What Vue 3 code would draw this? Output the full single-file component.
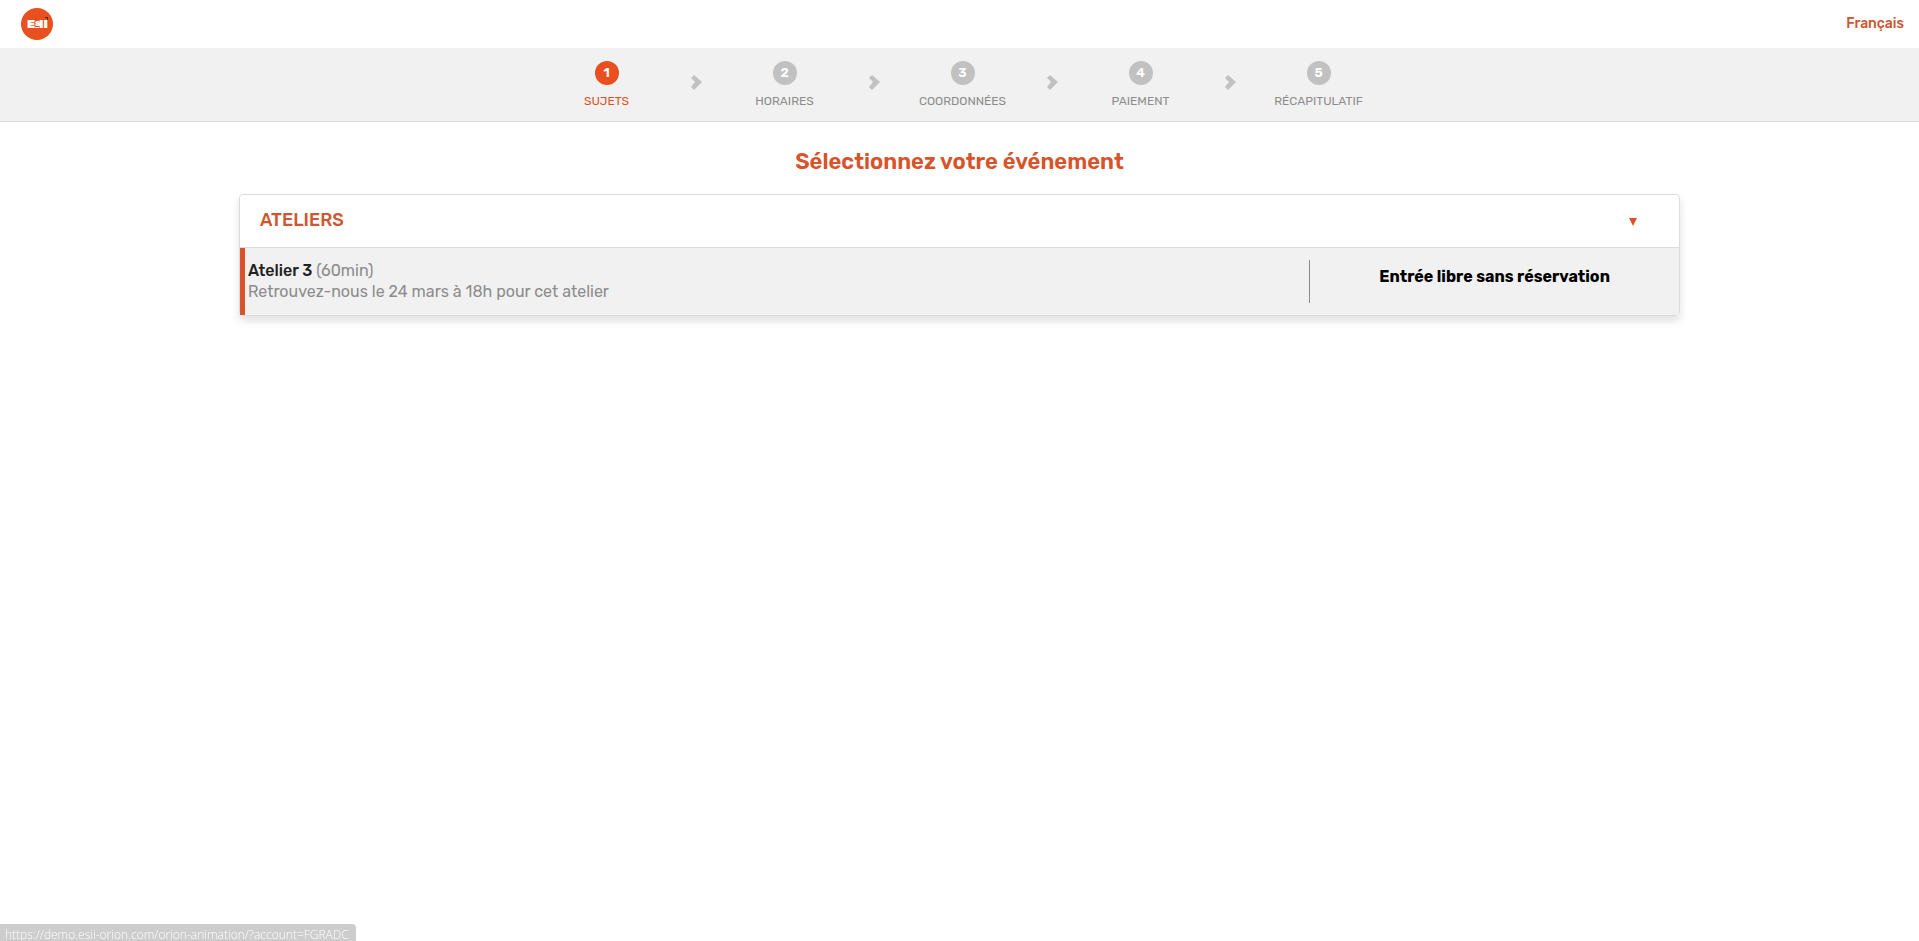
<script setup>
import { ref } from 'vue'

const steps = ['Sujets', 'Horaires', 'Coordonnées', 'Paiement', 'Récapitulatif']
const current = ref(0)
const open = ref(true)
</script>

<template>
  <div class="page">
    <header class="topbar">
      <a href="#" class="logo" aria-label="ESII">
        <svg viewBox="0 0 32 32" width="32" height="32" aria-hidden="true">
          <circle cx="16" cy="16" r="16" fill="#e8501f" />
          <text x="6" y="20" class="logo-text" font-size="12">E</text>
          <text x="14" y="18" class="logo-text" font-size="8">S</text>
          <rect x="14" y="19" width="4" height="1" fill="#fff" />
          <text x="18" y="20" class="logo-text" font-size="12">II</text>
          <path d="M24 9h3v3h-1v-2h-2z" fill="#5a2413" />
        </svg>
      </a>
      <a href="#" class="language">Français</a>
    </header>

    <nav class="stepper" aria-label="Étapes">
      <ol class="steps">
        <template v-for="(step, i) in steps" :key="step">
          <li v-if="i > 0" class="arrow" aria-hidden="true">
            <svg viewBox="0 0 12 16" width="12" height="16">
              <path d="M1 4L4 1L12 8L4 16L1 13L5 8z" fill="#c1c1c1" />
            </svg>
          </li>
          <li class="step" :class="{ active: i === current }">
            <span class="number">{{ i + 1 }}</span>
            <span class="label">{{ step }}</span>
          </li>
        </template>
      </ol>
    </nav>

    <main>
      <h1>Sélectionnez votre événement</h1>
      <section class="card">
        <button type="button" class="card-head" :aria-expanded="open" @click="open = !open">
          <span>ATELIERS</span>
          <svg class="caret" viewBox="0 0 8 8" width="8" height="8" aria-hidden="true">
            <path d="M0 0h8L4 8z" fill="#d9532a" />
          </svg>
        </button>
        <div v-if="open" class="event">
          <div class="info">
            <div><strong>Atelier 3</strong> (60min)</div>
            <div>Retrouvez-nous le 24 mars à 18h pour cet atelier</div>
          </div>
          <div class="entry">Entrée libre sans réservation</div>
        </div>
      </section>
    </main>

    <div class="status">https://demo.esii-orion.com/orion-animation/?account=FGRADC</div>
  </div>
</template>

<style>
body {
  margin: 0;
  background: #fff;
}
</style>

<style scoped>
.page {
  min-height: 100vh;
  font-family: Rubik, Roboto, "Liberation Sans", sans-serif;
  font-size: 16px;
  color: #8c8c8c;
}
.topbar {
  display: flex;
  align-items: center;
  justify-content: space-between;
  height: 48px;
  padding: 0 15px 0 21px;
}
.logo {
  display: flex;
}
.logo-text {
  font-family: Rubik, Roboto, sans-serif;
  font-weight: 900;
  fill: #fff;
}
.language {
  font-size: 14px;
  font-weight: 500;
  line-height: 20px;
  color: #cf5630;
  text-decoration: none;
}
.stepper {
  background: #f1f1f1;
  border-bottom: 1px solid #dcdcdc;
  padding-left: 6px;
}
.steps {
  display: flex;
  justify-content: center;
  list-style: none;
  margin: 0;
  padding: 13px 0 12px;
}
.step {
  display: flex;
  flex-direction: column;
  align-items: center;
  gap: 8px;
  width: 98px;
}
.arrow {
  display: flex;
  justify-content: center;
  width: 80px;
  padding-top: 13px;
}
.number {
  width: 24px;
  height: 24px;
  border-radius: 50%;
  background: #c1c1c1;
  color: #fff;
  font-size: 13px;
  font-weight: 600;
  line-height: 24px;
  text-align: center;
}
.label {
  font-size: 12px;
  line-height: 16px;
  text-transform: uppercase;
}
.active .number {
  background: #e8501f;
}
.active .label {
  color: #d9532a;
}
h1 {
  margin: 27px 0 19px;
  font-size: 22px;
  font-weight: 600;
  line-height: 26px;
  text-align: center;
  color: #d9532a;
}
.card {
  width: 75%;
  margin: 0 auto;
  border: 1px solid #dcdcdc;
  border-radius: 4px;
  box-shadow: 0 5px 8px rgba(0, 0, 0, 0.12);
}
.card-head {
  display: flex;
  align-items: center;
  justify-content: space-between;
  width: 100%;
  height: 53px;
  padding: 0 42px 2px 20px;
  border: 0;
  border-bottom: 1px solid #dcdcdc;
  border-radius: 4px 4px 0 0;
  background: #fff;
  font: inherit;
  font-size: 18px;
  font-weight: 500;
  color: #cf5630;
  cursor: pointer;
}
.caret {
  margin-top: 4px;
}
.event {
  display: flex;
  padding: 12px 0;
  border-left: 5px solid #d9532a;
  background: #f1f1f1;
}
.info {
  flex: 1;
  padding-left: 3px;
  line-height: 21px;
}
.info strong {
  font-weight: 500;
  color: #222;
}
.entry {
  width: 25.8%;
  box-sizing: border-box;
  padding: 6px 0 16px;
  border-left: 1px solid #8c8c8c;
  font-weight: 700;
  line-height: 21px;
  text-align: center;
  color: #000;
}
.status {
  position: fixed;
  left: 0;
  bottom: 0;
  height: 17px;
  padding: 0 7px 0 5px;
  border-radius: 0 4px 0 0;
  background: #cdcdcd;
  color: #fff;
  font-family: "Open Sans", sans-serif;
  font-size: 12px;
  font-weight: 300;
  line-height: 22px;
}
</style>
